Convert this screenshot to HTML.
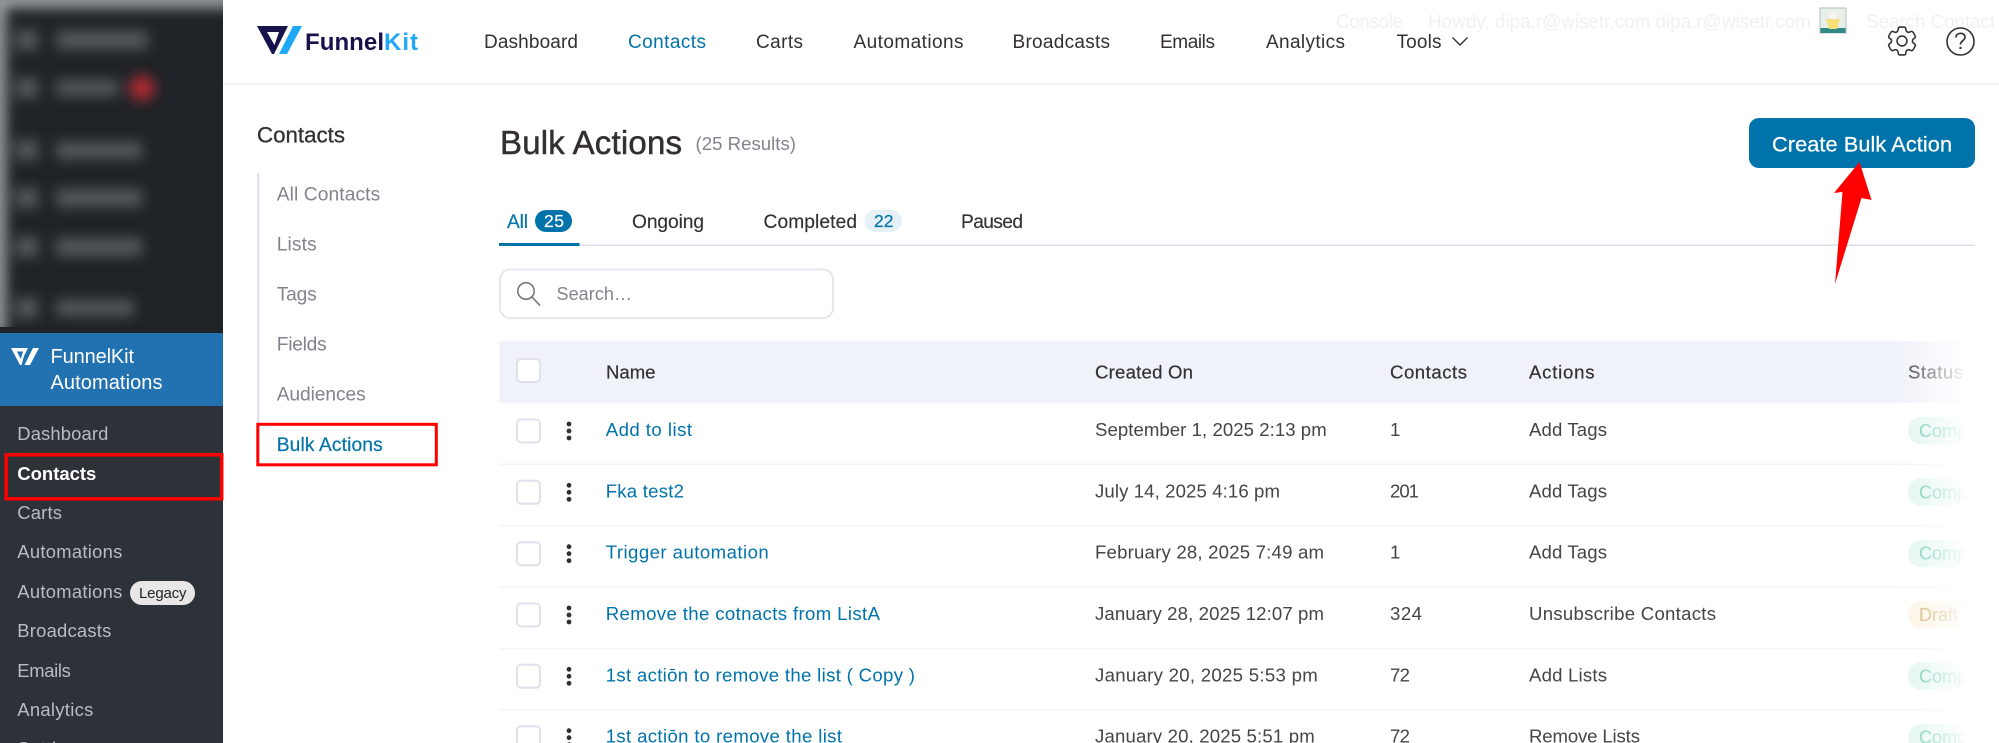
<!DOCTYPE html>
<html lang="en">
<head>
<meta charset="utf-8">
<title>FunnelKit Bulk Actions</title>
<style>
html,body{margin:0;padding:0;background:#fff;width:1999px;height:743px;overflow:hidden}
svg{display:block}
text{font-family:"Liberation Sans",sans-serif;white-space:pre}
.nav{font-size:19px;fill:#353030}
.sub{font-size:19.2px;fill:#82838e}
.wp{font-size:18.4px;fill:#b9bdc2}
.th{font-size:18.6px;fill:#353030;stroke:#353030;stroke-width:.2}
.td{font-size:18.6px;fill:#454549}
.lnk{font-size:18.6px;fill:#0073aa}
.tab{font-size:19.2px;fill:#353030;stroke:#353030;stroke-width:.15}
.pc{font-size:18px;fill:#5cc5a6;stroke:#5cc5a6;stroke-width:.2}
.ghost{font-size:19px;fill:#f1f1f1}
</style>
</head>
<body>
<svg xmlns="http://www.w3.org/2000/svg" width="1999" height="743" viewBox="0 0 1999 743">
<defs>
<filter id="bl" x="-20%" y="-20%" width="140%" height="140%"><feGaussianBlur stdDeviation="6.5"/></filter>
<linearGradient id="fade" x1="0" x2="1" y1="0" y2="0"><stop offset="0" stop-color="#fff" stop-opacity="0"/><stop offset="1" stop-color="#fff" stop-opacity="1"/></linearGradient>
<clipPath id="topc"><rect x="0" y="0" width="223" height="327"/></clipPath>
<rect id="cb" width="23" height="23" rx="4" fill="#fff" stroke="#e0e0ec" stroke-width="2"/>
<g id="dots" fill="#353030"><circle cx="0" cy="0" r="2.4"/><circle cx="0" cy="7" r="2.4"/><circle cx="0" cy="14" r="2.4"/></g>
</defs>

<!-- WP sidebar -->
<rect x="0" y="0" width="223" height="743" fill="#2c3238"/>
<rect x="0" y="0" width="223" height="333" fill="#1f2327"/>
<g clip-path="url(#topc)">
  <g filter="url(#bl)">
    <rect x="-10" y="-10" width="245" height="18" fill="#9a9e9f"/>
    <rect x="-10" y="-10" width="16" height="345" fill="#9a9e9f"/>
    <g fill="#53595d">
      <rect x="16" y="30" width="22" height="20"/><rect x="56" y="31" width="92" height="18"/>
      <rect x="16" y="78" width="22" height="20"/><rect x="56" y="80" width="62" height="16"/>
      <rect x="16" y="140" width="22" height="20"/><rect x="56" y="142" width="86" height="17"/>
      <rect x="16" y="188" width="22" height="20"/><rect x="56" y="189" width="86" height="18"/>
      <rect x="16" y="237" width="22" height="20"/><rect x="56" y="238" width="86" height="18"/>
      <rect x="16" y="298" width="22" height="20"/><rect x="56" y="300" width="78" height="16"/>
    </g>
    <circle cx="142" cy="88" r="13" fill="#a82a30"/>
  </g>
</g>
<rect x="0" y="333" width="223" height="73" fill="#2271b1"/>
<path d="M11 348H28L24 356L21.500 365H20L11 348ZM17 351.500L20.700 359L23 351.500Z" fill="#fff" fill-rule="evenodd"/>
<path d="M33 348H39L30 365H24.500Z" fill="#fff"/>
<text x="50.500" y="363" font-size="20" fill="#fff" textLength="83.500" lengthAdjust="spacing">FunnelKit</text>
<text x="50.500" y="389" font-size="20" fill="#fff" textLength="112" lengthAdjust="spacing">Automations</text>
<text class="wp" x="17.300" y="440" textLength="91" lengthAdjust="spacing">Dashboard</text>
<text x="17.300" y="480" font-size="18.500" font-weight="700" fill="#fff" textLength="79" lengthAdjust="spacing">Contacts</text>
<text class="wp" x="17.300" y="519" textLength="44.700" lengthAdjust="spacing">Carts</text>
<text class="wp" x="17.300" y="558" textLength="105" lengthAdjust="spacing">Automations</text>
<text class="wp" x="17.300" y="598" textLength="105" lengthAdjust="spacing">Automations</text>
<rect x="130" y="581" width="65" height="24" rx="12" fill="#e8e6e6"/>
<text x="139" y="598" font-size="15" fill="#222" textLength="47.500" lengthAdjust="spacing">Legacy</text>
<text class="wp" x="17.300" y="637" textLength="94" lengthAdjust="spacing">Broadcasts</text>
<text class="wp" x="17.300" y="677" textLength="53.500" lengthAdjust="spacing">Emails</text>
<text class="wp" x="17.300" y="716" textLength="76" lengthAdjust="spacing">Analytics</text>
<text class="wp" x="17.300" y="755" textLength="70" lengthAdjust="spacing">Settings</text>
<rect x="6.200" y="454.800" width="215.500" height="44" fill="none" stroke="#f00" stroke-width="3.500"/>

<!-- Top header -->
<rect x="223" y="83" width="1776" height="1.500" fill="#efefef"/>
<path d="M257 26H288L274 54H272ZM267 32L274.500 45L279 32Z" fill="#15134a" fill-rule="evenodd"/>
<path d="M293 26H302L287 54H279Z" fill="#1fa8f5"/>
<text x="305" y="50" font-size="24" font-weight="700" fill="#15134a" textLength="79" lengthAdjust="spacing">Funnel</text>
<text x="384" y="50" font-size="24" font-weight="700" fill="#1fa8f5" textLength="34" lengthAdjust="spacing">Kit</text>

<text class="nav" x="484" y="48" textLength="94" lengthAdjust="spacing">Dashboard</text>
<text class="nav" x="628" y="48" textLength="78" lengthAdjust="spacing" style="fill:#0073aa">Contacts</text>
<text class="nav" x="756" y="48" textLength="47" lengthAdjust="spacing">Carts</text>
<text class="nav" x="853.500" y="48" textLength="110" lengthAdjust="spacing">Automations</text>
<text class="nav" x="1012.500" y="48" textLength="97.500" lengthAdjust="spacing">Broadcasts</text>
<text class="nav" x="1160" y="48" textLength="55" lengthAdjust="spacing">Emails</text>
<text class="nav" x="1266" y="48" textLength="79" lengthAdjust="spacing">Analytics</text>
<text class="nav" x="1396.500" y="48" textLength="45" lengthAdjust="spacing">Tools</text>
<path d="M1452.500 37.500L1460 45L1467.500 37.500" fill="none" stroke="#353030" stroke-width="1.400"/>

<text class="ghost" x="1336" y="28" textLength="67" lengthAdjust="spacing">Console</text>
<text class="ghost" x="1428" y="28" textLength="383" lengthAdjust="spacing">Howdy, dipa.r@wisetr.com dipa.r@wisetr.com</text>
<rect x="1820" y="8" width="26" height="25" fill="#e6efe9" stroke="#b4bcb8" stroke-width="1"/>
<rect x="1820.500" y="28" width="25" height="5" fill="#2f8a86"/>
<path d="M1826 19H1840L1837 29H1829Z" fill="#f7df78"/>
<circle cx="1833" cy="15" r="4.500" fill="#f6f3ea"/>
<text class="ghost" x="1866" y="28" textLength="129" lengthAdjust="spacing">Search Contact</text>

<g transform="translate(1883.400 22.400) scale(1.550)" fill="none" stroke="#353030" stroke-width="1">
<path d="M9.594 3.940c.09-.542.56-.94 1.110-.94h2.593c.55 0 1.020.398 1.110.94l.213 1.281c.063.374.313.686.645.87.074.04.147.083.22.127.325.196.72.257 1.075.124l1.217-.456a1.125 1.125 0 0 1 1.370.49l1.296 2.247a1.125 1.125 0 0 1-.26 1.431l-1.003.827c-.293.241-.438.613-.43.992a7.723 7.723 0 0 1 0 .255c-.008.378.137.75.43.991l1.004.827c.424.35.534.955.26 1.430l-1.298 2.247a1.125 1.125 0 0 1-1.369.491l-1.217-.456c-.355-.133-.75-.072-1.076.124a6.470 6.470 0 0 1-.22.128c-.331.183-.581.495-.644.869l-.213 1.281c-.09.543-.56.94-1.110.94h-2.594c-.55 0-1.019-.398-1.110-.94l-.213-1.281c-.062-.374-.312-.686-.644-.87a6.520 6.520 0 0 1-.22-.127c-.325-.196-.72-.257-1.076-.124l-1.217.456a1.125 1.125 0 0 1-1.369-.49l-1.297-2.247a1.125 1.125 0 0 1 .26-1.431l1.004-.827c.292-.24.437-.613.43-.991a6.932 6.932 0 0 1 0-.255c.007-.38-.138-.751-.43-.992l-1.004-.827a1.125 1.125 0 0 1-.26-1.430l1.297-2.247a1.125 1.125 0 0 1 1.370-.491l1.216.456c.356.133.751.072 1.076-.124.072-.044.146-.086.22-.128.332-.183.582-.495.644-.869l.214-1.280Z"/>
<circle cx="12" cy="12" r="3.200"/>
</g>
<circle cx="1960.500" cy="41.500" r="13.500" fill="none" stroke="#353030" stroke-width="1.600"/>
<path d="M1956 37.500c0-2.800 2-4.200 4.500-4.200s4.500 1.500 4.500 3.900c0 3.300-4.500 3.500-4.500 7.300" fill="none" stroke="#353030" stroke-width="1.700"/>
<circle cx="1960.500" cy="48" r="1.200" fill="#353030"/>

<!-- Contacts submenu -->
<text x="257" y="142.700" font-size="22.300" fill="#353030" stroke="#353030" stroke-width=".3" textLength="88" lengthAdjust="spacing">Contacts</text>
<rect x="257" y="173" width="2.500" height="250" fill="#e3e3f0"/>
<text class="sub" x="276.700" y="200.700" textLength="103.500" lengthAdjust="spacing">All Contacts</text>
<text class="sub" x="276.700" y="250.700" textLength="40" lengthAdjust="spacing">Lists</text>
<text class="sub" x="276.700" y="300.700" textLength="40" lengthAdjust="spacing">Tags</text>
<text class="sub" x="276.700" y="350.700" textLength="50" lengthAdjust="spacing">Fields</text>
<text class="sub" x="276.700" y="400.700" textLength="89" lengthAdjust="spacing">Audiences</text>
<text class="sub" x="276.700" y="451" textLength="106" lengthAdjust="spacing" style="fill:#0073aa;stroke:#0073aa;stroke-width:.2">Bulk Actions</text>
<rect x="257.800" y="424.300" width="178.500" height="40.500" fill="none" stroke="#f00" stroke-width="3"/>

<!-- Title -->
<text x="500" y="154" font-size="33" fill="#353030" stroke="#353030" stroke-width=".5" textLength="182" lengthAdjust="spacing">Bulk Actions</text>
<text x="695.500" y="150" font-size="18.600" fill="#82838e" textLength="100.500" lengthAdjust="spacing">(25 Results)</text>
<rect x="1749" y="118" width="226" height="50" rx="10" fill="#0073aa"/>
<text x="1772" y="151.500" font-size="21.700" fill="#fff" stroke="#fff" stroke-width=".25" textLength="180" lengthAdjust="spacing">Create Bulk Action</text>

<!-- Tabs -->
<rect x="499" y="244.500" width="1476" height="1.500" fill="#dedeea"/>
<rect x="499" y="243" width="80.500" height="3" fill="#0073aa"/>
<text class="tab" x="507" y="228" textLength="21" lengthAdjust="spacing" style="fill:#0073aa;stroke:#0073aa">All</text>
<rect x="535" y="210" width="37" height="22" rx="11" fill="#0073aa"/>
<text x="544" y="227" font-size="17.500" fill="#fff" stroke="#fff" stroke-width=".2" textLength="20" lengthAdjust="spacing">25</text>
<text class="tab" x="632" y="228" textLength="72" lengthAdjust="spacing">Ongoing</text>
<text class="tab" x="763.500" y="228" textLength="93.500" lengthAdjust="spacing">Completed</text>
<rect x="864.500" y="210" width="37.500" height="22" rx="11" fill="#e6f1f7"/>
<text x="874" y="227" font-size="17.500" fill="#0073aa" stroke="#0073aa" stroke-width=".2" textLength="19.500" lengthAdjust="spacing">22</text>
<text class="tab" x="961" y="228" textLength="62" lengthAdjust="spacing">Paused</text>

<!-- Search -->
<rect x="500" y="269.500" width="333" height="48.500" rx="10" fill="#fff" stroke="#e4e4ef" stroke-width="1.800"/>
<circle cx="526" cy="291" r="8.200" fill="none" stroke="#6e6f78" stroke-width="1.500"/>
<path d="M532 297L540 305.500" stroke="#6e6f78" stroke-width="1.500" fill="none"/>
<text x="556.500" y="300" font-size="18" fill="#82838e" textLength="75.500" lengthAdjust="spacing">Search…</text>

<!-- Table -->
<rect x="499.500" y="341" width="1500" height="62" fill="#f0f2fa"/>
<use href="#cb" x="517" y="359"/>
<text class="th" x="606" y="378.500" textLength="49.500" lengthAdjust="spacing">Name</text>
<text class="th" x="1095" y="378.500" textLength="98" lengthAdjust="spacing">Created On</text>
<text class="th" x="1390" y="378.500" textLength="77" lengthAdjust="spacing">Contacts</text>
<text class="th" x="1529" y="378.500" textLength="65.500" lengthAdjust="spacing">Actions</text>
<text class="th" x="1908" y="378.500" textLength="55" lengthAdjust="spacing">Status</text>

<g fill="#f3f3f9">
<rect x="499.500" y="463.500" width="1500" height="1.500"/>
<rect x="499.500" y="525" width="1500" height="1.500"/>
<rect x="499.500" y="586.300" width="1500" height="1.500"/>
<rect x="499.500" y="647.700" width="1500" height="1.500"/>
<rect x="499.500" y="709" width="1500" height="1.500"/>
</g>

<!-- Row 1 -->
<use href="#cb" x="517" y="419.500"/><use href="#dots" x="569" y="424"/>
<text class="lnk" x="605.700" y="436" textLength="86.300" lengthAdjust="spacing">Add to list</text>
<text class="td" x="1095" y="436" textLength="231.700" lengthAdjust="spacing">September 1, 2025 2:13 pm</text>
<text class="td" x="1390" y="436" textLength="7" lengthAdjust="spacing">1</text>
<text class="td" x="1529" y="436" textLength="78" lengthAdjust="spacing">Add Tags</text>
<rect x="1908" y="417" width="80" height="27.500" rx="13.700" fill="#dff5ee"/>
<text class="pc" x="1919" y="437">Complete</text>

<!-- Row 2 -->
<use href="#cb" x="517" y="480.800"/><use href="#dots" x="569" y="485.300"/>
<text class="lnk" x="605.700" y="497.300" textLength="78.300" lengthAdjust="spacing">Fka test2</text>
<text class="td" x="1095" y="497.300" textLength="185" lengthAdjust="spacing">July 14, 2025 4:16 pm</text>
<text class="td" x="1390" y="497.300" textLength="29" lengthAdjust="spacing">201</text>
<text class="td" x="1529" y="497.300" textLength="78" lengthAdjust="spacing">Add Tags</text>
<rect x="1908" y="478.300" width="80" height="27.500" rx="13.700" fill="#dff5ee"/>
<text class="pc" x="1919" y="498.300">Complete</text>

<!-- Row 3 -->
<use href="#cb" x="517" y="542.200"/><use href="#dots" x="569" y="546.700"/>
<text class="lnk" x="605.700" y="558.700" textLength="163" lengthAdjust="spacing">Trigger automation</text>
<text class="td" x="1095" y="558.700" textLength="229" lengthAdjust="spacing">February 28, 2025 7:49 am</text>
<text class="td" x="1390" y="558.700" textLength="7" lengthAdjust="spacing">1</text>
<text class="td" x="1529" y="558.700" textLength="78" lengthAdjust="spacing">Add Tags</text>
<rect x="1908" y="539.700" width="80" height="27.500" rx="13.700" fill="#dff5ee"/>
<text class="pc" x="1919" y="559.700">Complete</text>

<!-- Row 4 -->
<use href="#cb" x="517" y="603.500"/><use href="#dots" x="569" y="608"/>
<text class="lnk" x="605.700" y="620" textLength="274.300" lengthAdjust="spacing">Remove the cotnacts from ListA</text>
<text class="td" x="1095" y="620" textLength="229" lengthAdjust="spacing">January 28, 2025 12:07 pm</text>
<text class="td" x="1390" y="620" textLength="32" lengthAdjust="spacing">324</text>
<text class="td" x="1529" y="620" textLength="187" lengthAdjust="spacing">Unsubscribe Contacts</text>
<rect x="1908" y="601" width="66" height="27.500" rx="13.700" fill="#fbf3e0"/>
<text class="pc" x="1919" y="621" style="fill:#c9a45c;stroke:#c9a45c">Draft</text>

<!-- Row 5 -->
<use href="#cb" x="517" y="664.800"/><use href="#dots" x="569" y="669.300"/>
<text class="lnk" x="605.700" y="681.300" textLength="309.300" lengthAdjust="spacing">1st actiōn to remove the list ( Copy )</text>
<text class="td" x="1095" y="681.300" textLength="222.700" lengthAdjust="spacing">January 20, 2025 5:53 pm</text>
<text class="td" x="1390" y="681.300" textLength="20" lengthAdjust="spacing">72</text>
<text class="td" x="1529" y="681.300" textLength="78" lengthAdjust="spacing">Add Lists</text>
<rect x="1908" y="662.300" width="80" height="27.500" rx="13.700" fill="#dff5ee"/>
<text class="pc" x="1919" y="682.300">Complete</text>

<!-- Row 6 -->
<use href="#cb" x="517" y="726.200"/><use href="#dots" x="569" y="730.700"/>
<text class="lnk" x="605.700" y="742.700" textLength="236.300" lengthAdjust="spacing">1st actiōn to remove the list</text>
<text class="td" x="1095" y="742.700" textLength="219.700" lengthAdjust="spacing">January 20, 2025 5:51 pm</text>
<text class="td" x="1390" y="742.700" textLength="20" lengthAdjust="spacing">72</text>
<text class="td" x="1529" y="742.700" textLength="111" lengthAdjust="spacing">Remove Lists</text>
<rect x="1908" y="723.700" width="80" height="27.500" rx="13.700" fill="#dff5ee"/>
<text class="pc" x="1919" y="743.700">Complete</text>

<!-- Right fade -->
<rect x="1893" y="335" width="74" height="408" fill="url(#fade)"/>
<rect x="1967" y="335" width="32" height="408" fill="#fff"/>

<!-- Red arrow -->
<path d="M1859.500 162L1871.500 200L1861.500 198L1835 284L1842.500 192L1834 193Z" fill="#f00"/>
</svg>
</body>
</html>
